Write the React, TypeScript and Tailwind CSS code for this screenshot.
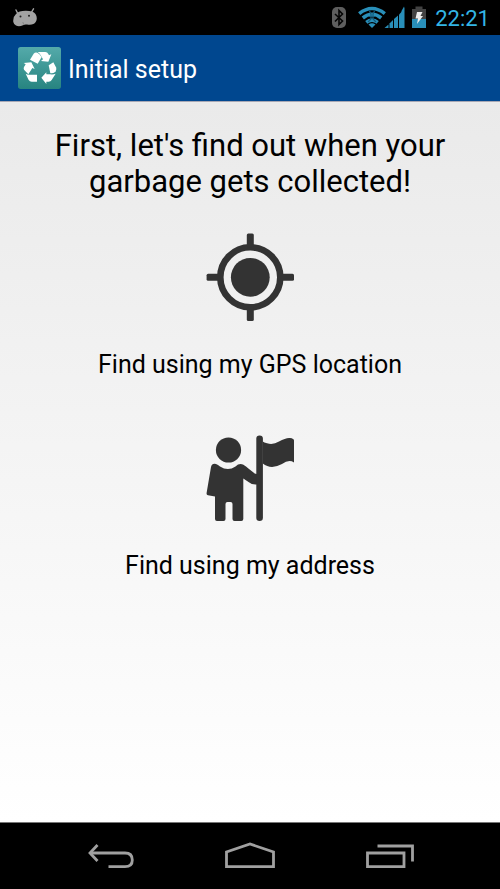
function AppIcon() {
  return (
    <svg className="h-[42px] w-[43px]" viewBox="0 0 129 126" aria-hidden="true">
      <defs>
        <linearGradient id="teal" x1="0" y1="0" x2="0" y2="1">
          <stop offset="0" stopColor="#54aaaa" />
          <stop offset="1" stopColor="#278480" />
        </linearGradient>
      </defs>
      <rect width="129" height="126" rx="8" fill="url(#teal)" />
      <g fill="#fff">
        <path d="M36 38 L47 20 Q51 15 58 17 Q64 19 71 30 L59 50 Z" />
        <path d="M59 15 H82 Q88 15 91 21 L93 25 L100 22 L91 44 L69 42 L75 37 L69 26 Q65 18 59 15 Z" />
        <path d="M92 55 L106 46 L114 61 Q117 67 113 73 Q109 79 102 79 H97 Z" />
        <path d="M113 80 L101 99 Q98 104 92 104 H85 V111 L70 92 L85 76 V82 H97 Q107 83 113 80 Z" />
        <path d="M23 80 Q27 83 34 83 H57 V104 H41 Q35 104 32 99 Z" />
        <path d="M17 48 L40 46 L50 66 L43 63 L31 82 L18 68 Q16 64 18 60 L23 52 Z" />
      </g>
    </svg>
  );
}

function StatusBar() {
  return (
    <div className="flex h-[35px] items-center justify-between bg-black pr-[10px] pl-[13px]">
      <svg className="h-5 w-6" viewBox="0 0 24 20" aria-hidden="true">
        <path d="M3 2 L5 6 M20.5 0.8 L18 5" stroke="#a3a3a3" strokeWidth="1.4" strokeLinecap="round" />
        <path d="M0.3 14 Q-0.3 9 3 6 Q6 2.7 13 2.8 Q20 2.8 22.5 6 Q25 10 22.7 14 Q20.5 17.5 14 16.5 Q11.5 16.2 10 17.2 Q6 19 3 17.5 Q0.8 16.5 0.3 14 Z" fill="#a3a3a3" />
        <circle cx="7.5" cy="8.5" r="1" fill="#222" />
        <circle cx="16" cy="7.8" r="1" fill="#222" />
        <path d="M10.5 16.5 Q10.5 14.5 9.5 14" stroke="#777" strokeWidth="0.7" fill="none" />
      </svg>
      <div className="flex items-center">
        <svg className="h-6 w-[94px]" viewBox="0 0 94 24" aria-hidden="true">
          <rect x="0" y="1" width="14" height="21" rx="5" fill="#5e5e5e" />
          <path d="M3 8 L10.5 15 L7 18.5 V4.5 L10.5 8 L3 15.5" fill="none" stroke="#050505" strokeWidth="1.6" />
          <g fill="none" stroke="#298fb9" strokeWidth="3.6">
            <path d="M27.2 7.6 Q40 -2.6 52.8 7.6" />
            <path d="M30.8 12 Q40 4.5 49.2 12" />
            <path d="M34.3 16.3 Q40 11.8 45.7 16.3" />
          </g>
          <path d="M36.5 18.5 Q40 16 43.5 18.5 L40 22 Z" fill="#298fb9" />
          <path d="M37.5 5 L39 8 V13 L36 16 M42.5 5 L41 8 V13 L44 16 M37 10.5 H43" stroke="#155c7c" strokeWidth="1.2" fill="none" />
          <g fill="#298fb9">
            <path d="M52.5 22 L56.5 18.5 V22 Z" />
            <path d="M57.5 22 V17.5 L61 14 V22 Z" />
            <path d="M62 22 V13 L66 9.5 V22 Z" />
            <path d="M67 22 V8.5 L70.5 5 V22 Z" />
            <path d="M71.5 22 V4 L72.5 0.5 V22 Z" />
          </g>
          <path d="M72 0.5 V22 H69.5 V5 Z" fill="#298fb9" />
          <path d="M80 3 H83.5 V0.5 H90.5 V3 H94 V22 H80 Z" fill="#424242" />
          <path d="M80 13 H94 V22 H80 Z" fill="#298fb9" />
          <path d="M85 6 H90.5 L88.5 10 H91 L85 18 L86 12.5 H83.5 Z" fill="#eee" />
        </svg>
        <span className="pt-[3px] pl-[9px] font-[Roboto,sans-serif] text-[22px] leading-6 text-[#33b5e5]">
          22:21
        </span>
      </div>
    </div>
  );
}

function GpsIcon() {
  return (
    <svg className="h-[88px] w-[88px]" viewBox="0 0 88 88" fill="#333" aria-hidden="true">
      <circle cx="44.3" cy="44.3" r="19.4" />
      <circle cx="44.3" cy="44.3" r="30" fill="none" stroke="#333" strokeWidth="6.6" />
      <rect x="40.8" y="0.6" width="7" height="14" rx="1.5" />
      <rect x="40.8" y="74" width="7" height="14" rx="1.5" />
      <rect x="0.6" y="40.8" width="14" height="7" rx="1.5" />
      <rect x="74" y="40.8" width="14" height="7" rx="1.5" />
    </svg>
  );
}

function AddressIcon() {
  return (
    <svg className="h-[88px] w-[88px]" viewBox="0 0 88 88" fill="#333" aria-hidden="true">
      <circle cx="22.5" cy="16" r="12.6" />
      <path d="M5 33 Q6 29 10 30 Q12 30.5 14 32.5 Q22 37.5 29.5 32.5 Q33 29 37 30.5 Q40 32 43 35 L47.5 38.5 Q49 40 51 40 V50.5 Q46 51 42.5 48 L37.3 44.5 V85 Q37.3 87 35.3 87 H28.5 Q26.5 87 26.5 85 V70 Q26.5 68 24.5 68 H21.5 Q19.5 68 19.5 70 V85 Q19.5 87 17.5 87 H11 Q9 87 9 85 V62.5 L2 61.3 Q0.3 61 0.6 59 Z" />
      <rect x="50.3" y="1.5" width="6.6" height="85.5" rx="3.3" />
      <path d="M56.8 7.5 Q58 8.5 61 9.3 Q67 11.3 73 7.5 Q80 3.5 84 4 Q88 4.5 88 6.5 V28.5 Q83 25 76 30 Q65 36 56.8 29.5 Z" />
    </svg>
  );
}

function NavBar() {
  return (
    <nav className="flex h-[67px] items-center justify-center gap-[84px] border-t border-[#777] bg-black">
      <button aria-label="Back">
        <svg className="h-7 w-[54px]" viewBox="0 0 54 28" fill="none" stroke="#a0a0a0" strokeWidth="2.8">
          <path d="M5 11 H40 C45 11 47.3 14 47.3 18 C47.3 22 45 24.7 40 24.7 H23.5" />
          <path d="M12.5 3 L5 11 L12.5 19" />
        </svg>
      </button>
      <button aria-label="Home">
        <svg className="h-7 w-[54px]" viewBox="0 0 54 28" fill="none" stroke="#a0a0a0" strokeWidth="2.8">
          <path d="M3.5 24.7 V10 L27 2 L50.5 10 V24.7 Z" />
        </svg>
      </button>
      <button aria-label="Recent apps">
        <svg className="h-7 w-[54px]" viewBox="0 0 54 28" fill="none" stroke="#a0a0a0" strokeWidth="2.8">
          <path d="M6.5 11 H43 V24.7 H6.5 Z" />
          <path d="M16.5 4 H51.5 V19.5" />
        </svg>
      </button>
    </nav>
  );
}

function App() {
  return (
    <div className="flex min-h-screen flex-col font-[Roboto,sans-serif] text-black">
      <StatusBar />
      <header className="flex h-[66px] items-center gap-[7px] bg-[#00478f] px-[18px]">
        <AppIcon />
        <span className="pt-[3px] text-[25px] text-white">Initial setup</span>
      </header>
      <main className="flex flex-1 flex-col items-center border-t border-[#a8a8b4] bg-linear-to-b from-[#eaeaea] to-white px-10 pt-[26px]">
        <h1 className="text-center text-[31px] leading-9">
          First, let's find out when your garbage gets collected!
        </h1>
        <button className="mt-[33px] flex flex-col items-center gap-[26px]">
          <GpsIcon />
          <span className="text-[25px] leading-9">Find using my GPS location</span>
        </button>
        <button className="mt-[51px] flex flex-col items-center gap-[26px]">
          <AddressIcon />
          <span className="text-[25px] leading-9">Find using my address</span>
        </button>
      </main>
      <NavBar />
    </div>
  );
}

export default App;
